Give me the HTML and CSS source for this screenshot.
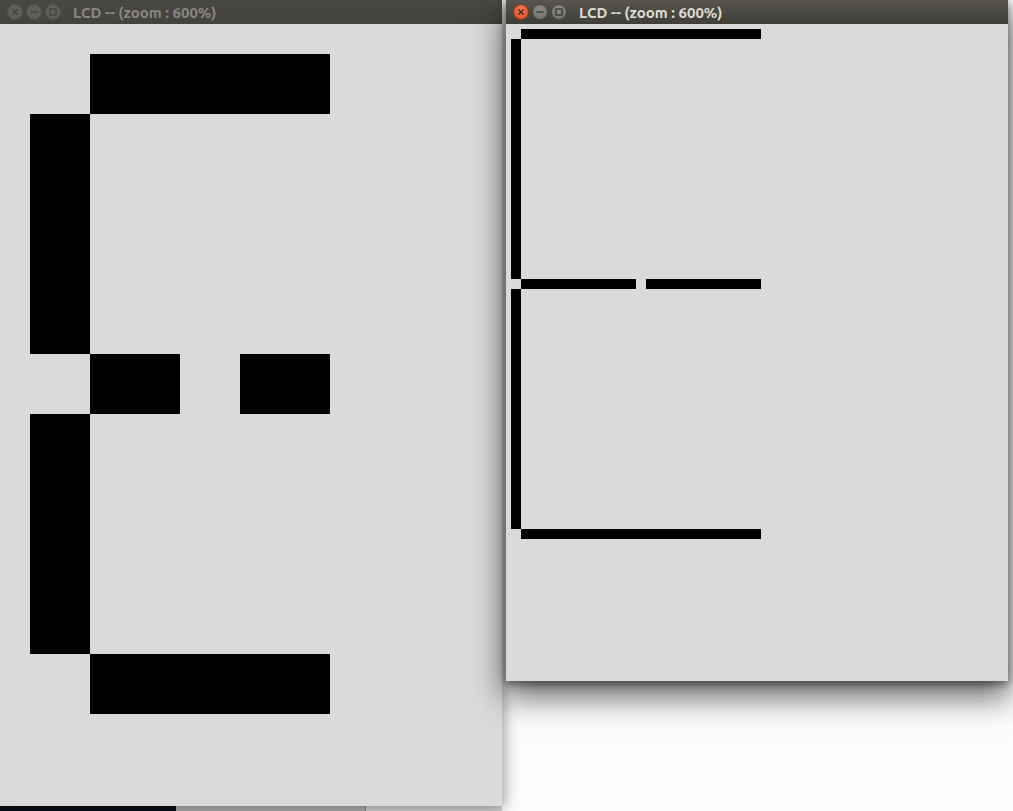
FILE: index.html
```html
<!DOCTYPE html>
<html>
<head>
<meta charset="utf-8">
<link rel="stylesheet" href="styles.css">
</head>
<body>
<div class="desktop">
  <div class="dock">
    <span class="dock-a"></span>
    <span class="dock-b"></span>
    <span class="dock-c"></span>
  </div>

  <div class="window win-left inactive">
    <div class="titlebar">
      <div class="buttons">
        <span class="btn btn-close"><svg viewBox="0 0 14 14"><path d="M4.5 4.5 9.5 9.5M9.5 4.5 4.5 9.5"/></svg></span>
        <span class="btn"><svg viewBox="0 0 14 14"><path d="M3.5 7h7"/></svg></span>
        <span class="btn"><svg viewBox="0 0 14 14"><rect x="4" y="4" width="6" height="6"/></svg></span>
      </div>
      <span class="title">LCD -- (zoom : 600%)</span>
    </div>
    <div class="content lcd-big">
      <div class="seg s-top"></div>
      <div class="seg s-lu"></div>
      <div class="seg s-ml"></div>
      <div class="seg s-mr"></div>
      <div class="seg s-ll"></div>
      <div class="seg s-bot"></div>
    </div>
  </div>

  <div class="window win-right active">
    <div class="titlebar">
      <div class="buttons">
        <span class="btn btn-close"><svg viewBox="0 0 14 14"><path d="M4.5 4.5 9.5 9.5M9.5 4.5 4.5 9.5"/></svg></span>
        <span class="btn"><svg viewBox="0 0 14 14"><path d="M3.5 7h7"/></svg></span>
        <span class="btn"><svg viewBox="0 0 14 14"><rect x="4" y="4" width="6" height="6"/></svg></span>
      </div>
      <span class="title">LCD -- (zoom : 600%)</span>
    </div>
    <div class="content lcd-small">
      <div class="seg s-top"></div>
      <div class="seg s-lu"></div>
      <div class="seg s-ml"></div>
      <div class="seg s-mr"></div>
      <div class="seg s-ll"></div>
      <div class="seg s-bot"></div>
    </div>
  </div>
</div>
</body>
</html>
```
FILE: styles.css
```css
html, body {
  margin: 0;
  padding: 0;
}
body {
  width: 1013px;
  height: 811px;
  overflow: hidden;
  background: #fcfcfc;
  font-family: "Ubuntu", Roboto, "DejaVu Sans", sans-serif;
}
.desktop {
  position: relative;
  width: 1013px;
  height: 811px;
  background: #fcfcfc;
}
.dock {
  position: absolute;
  left: 0;
  top: 806px;
  width: 502px;
  height: 5px;
  display: flex;
}
.dock-a { width: 176px; background: #0a0e15; }
.dock-b { width: 189px; background: #b4b3b3; border-right: 1px solid #8d8d8d; }
.dock-c { flex: 1; background: #d7d7d7; }

.window {
  position: absolute;
  top: 0;
  display: flex;
  flex-direction: column;
  background: #dadada;
}
.win-left {
  left: 0;
  width: 502px;
  height: 806px;
  box-shadow: 2px 2px 14px rgba(0,0,0,0.4);
}
.win-right {
  left: 506px;
  width: 502px;
  height: 681px;
  box-shadow: 0 14px 30px 2px rgba(0,0,0,0.6), 0 3px 8px rgba(0,0,0,0.45);
}
.titlebar {
  height: 24px;
  flex: none;
  display: flex;
  align-items: center;
  box-sizing: border-box;
}
.active .titlebar {
  background: linear-gradient(#58554e, #3e3d38);
}
.inactive .titlebar {
  background: linear-gradient(#494842, #43423d);
}
.buttons {
  display: flex;
  gap: 3px;
  margin-left: 7px;
  margin-right: 12px;
}
.btn {
  width: 16px;
  height: 16px;
  border-radius: 50%;
  box-sizing: border-box;
  display: flex;
  align-items: center;
  justify-content: center;
}
.btn svg {
  width: 14px;
  height: 14px;
  fill: none;
  stroke-width: 1.4;
}
.active .btn {
  background: radial-gradient(circle at 50% 35%, #8f8d88, #6d6b66);
  border: 1px solid #4a4944;
}
.active .btn svg { stroke: #3b3a36; }
.active .btn-close {
  background: radial-gradient(circle at 50% 35%, #f27a4e, #d94b1f);
  border: 1px solid #8a3a1e;
}
.active .btn-close svg { stroke: #3a2a24; }
.inactive .btn {
  background: #5f5e59;
  border: 1px solid #53524d;
}
.inactive .btn svg { stroke: #45443f; }
.title {
  font-weight: 700;
  font-size: 15px;
  white-space: nowrap;
  letter-spacing: 0;
}
.active .title { color: #dfdbd2; }
.inactive .title { color: #8a8882; }

.content {
  flex: 1;
  display: grid;
  box-sizing: border-box;
}
.seg { background: #000; }

/* large LCD: 30px cells */
.lcd-big {
  padding: 30px 0 0 30px;
  grid-template-columns: repeat(10, 30px);
  grid-template-rows: repeat(22, 30px);
  align-content: start;
  justify-content: start;
}
/* small LCD: 5px cells */
.lcd-small {
  padding: 5px 0 0 5px;
  grid-template-columns: repeat(50, 5px);
  grid-template-rows: repeat(102, 5px);
  align-content: start;
  justify-content: start;
}
.lcd-big .s-top { grid-column: 3 / 11; grid-row: 1 / 3; }
.lcd-big .s-lu  { grid-column: 1 / 3;  grid-row: 3 / 11; }
.lcd-big .s-ml  { grid-column: 3 / 6;  grid-row: 11 / 13; }
.lcd-big .s-mr  { grid-column: 8 / 11; grid-row: 11 / 13; }
.lcd-big .s-ll  { grid-column: 1 / 3;  grid-row: 13 / 21; }
.lcd-big .s-bot { grid-column: 3 / 11; grid-row: 21 / 23; }

.lcd-small .s-top { grid-column: 3 / 51; grid-row: 1 / 3; }
.lcd-small .s-lu  { grid-column: 1 / 3;  grid-row: 3 / 51; }
.lcd-small .s-ml  { grid-column: 3 / 26; grid-row: 51 / 53; }
.lcd-small .s-mr  { grid-column: 28 / 51; grid-row: 51 / 53; }
.lcd-small .s-ll  { grid-column: 1 / 3;  grid-row: 53 / 101; }
.lcd-small .s-bot { grid-column: 3 / 51; grid-row: 101 / 103; }
```
